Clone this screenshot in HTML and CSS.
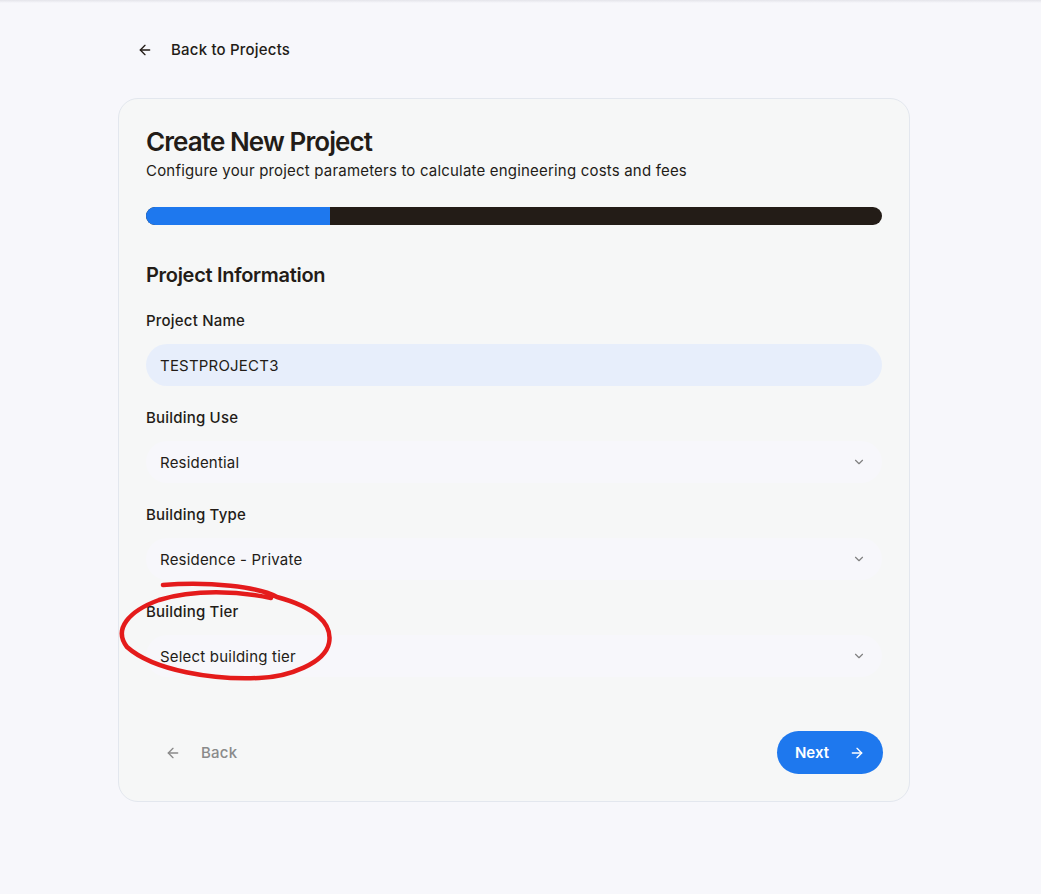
FILE: index.html
```html
<!DOCTYPE html>
<html lang="en">
<head>
<meta charset="utf-8">
<title>Create New Project</title>
<link rel="stylesheet" href="styles.css">
</head>
<body>
<div class="topline"></div>
<main class="page">
  <a class="back-link" href="#">
    <svg class="ico" width="16" height="16" viewBox="0 0 24 24" fill="none" stroke="currentColor" stroke-width="2" stroke-linecap="round" stroke-linejoin="round"><path d="M19 12H5"/><path d="M12 19l-7-7 7-7"/></svg>
    <span>Back to Projects</span>
  </a>

  <section class="card">
    <h1 class="title">Create New Project</h1>
    <p class="subtitle">Configure your project parameters to calculate engineering costs and fees</p>

    <div class="progress"><div class="progress-fill" style="width:25%"></div></div>

    <h2 class="section-title">Project Information</h2>

    <div class="fields">
      <div class="field">
        <label class="label">Project Name</label>
        <div class="input">TESTPROJECT3</div>
      </div>
      <div class="field">
        <label class="label">Building Use</label>
        <div class="select"><span>Residential</span>
          <svg class="chev" width="14" height="14" viewBox="0 0 24 24" fill="none" stroke="currentColor" stroke-width="2" stroke-linecap="round" stroke-linejoin="round"><path d="M6 9l6 6 6-6"/></svg>
        </div>
      </div>
      <div class="field">
        <label class="label">Building Type</label>
        <div class="select"><span>Residence - Private</span>
          <svg class="chev" width="14" height="14" viewBox="0 0 24 24" fill="none" stroke="currentColor" stroke-width="2" stroke-linecap="round" stroke-linejoin="round"><path d="M6 9l6 6 6-6"/></svg>
        </div>
      </div>
      <div class="field">
        <label class="label">Building Tier</label>
        <div class="select"><span>Select building tier</span>
          <svg class="chev" width="14" height="14" viewBox="0 0 24 24" fill="none" stroke="currentColor" stroke-width="2" stroke-linecap="round" stroke-linejoin="round"><path d="M6 9l6 6 6-6"/></svg>
        </div>
      </div>
    </div>

    <div class="actions">
      <button class="btn-back" type="button">
        <svg width="16" height="16" viewBox="0 0 24 24" fill="none" stroke="currentColor" stroke-width="2" stroke-linecap="round" stroke-linejoin="round"><path d="M19 12H5"/><path d="M12 19l-7-7 7-7"/></svg>
        <span>Back</span>
      </button>
      <button class="btn-next" type="button">
        <span>Next</span>
        <svg width="16" height="16" viewBox="0 0 24 24" fill="none" stroke="currentColor" stroke-width="2" stroke-linecap="round" stroke-linejoin="round"><path d="M5 12h14"/><path d="M12 5l7 7-7 7"/></svg>
      </button>
    </div>

    <svg class="scribble" width="230" height="110" viewBox="0 0 230 110" fill="none">
      <path d="M44,4 C90,0 140,6 158,16 C195,26 214,42 210,62 C206,82 170,96 140,97 C95,99 35,90 8,66 C-6,48 10,30 40,19 C75,8 120,10 152,17" stroke="#e41b1b" stroke-width="4.5" stroke-linecap="round" stroke-linejoin="round"/>
    </svg>
  </section>
</main>
</body>
</html>
```

FILE: styles.css
```css
* { box-sizing: border-box; }
html, body { margin: 0; padding: 0; }
body {
  background: #f7f7fb;
  font-family: Inter, "Noto Sans", "Liberation Sans", sans-serif;
  color: #231c17;
  min-height: 894px;
}
.topline {
  height: 3px;
  background: linear-gradient(#e4e4ea, #f7f7fb);
}
.page {
  width: 792px;
  margin-left: 118px;
  padding-top: 37px;
}
.back-link {
  display: inline-flex;
  align-items: center;
  gap: 18px;
  margin-left: 19px;
  color: #231c17;
  text-decoration: none;
  font-size: 15px;
  font-weight: 500;
  line-height: 20px;
  letter-spacing: 0.2px;
}
.back-link .ico { color: #231c17; }
.card {
  position: relative;
  margin-top: 36px;
  background: #f6f7f7;
  border: 1px solid #e3e7ee;
  border-radius: 20px;
  padding: 25px 27px 27px 27px;
}
.title {
  margin: 0;
  font-size: 26px;
  font-weight: 600;
  letter-spacing: -0.9px;
  line-height: 36px;
}
.subtitle {
  margin: 0;
  font-size: 15px;
  line-height: 22px;
  letter-spacing: 0.19px;
  color: #231c17;
}
.progress {
  margin-top: 25px;
  height: 18px;
  border-radius: 9px;
  background: #231c17;
  overflow: hidden;
}
.progress-fill {
  height: 100%;
  background: #1e78ee;
}
.section-title {
  margin: 36px 0 0 0;
  font-size: 20px;
  font-weight: 600;
  line-height: 28px;
  letter-spacing: -0.3px;
}
.fields {
  margin-top: 21px;
  display: flex;
  flex-direction: column;
  gap: 21px;
}
.field {
  display: flex;
  flex-direction: column;
  gap: 12px;
}
.label {
  font-size: 15px;
  font-weight: 500;
  line-height: 22px;
  letter-spacing: 0.2px;
}
.input, .select {
  height: 42px;
  border-radius: 21px;
  padding: 0 14px;
  display: flex;
  align-items: center;
  font-size: 15px;
  letter-spacing: 0.2px;
}
.input { background: #e7eefb; }
.select {
  background: #f7f7fb;
  justify-content: space-between;
  padding-right: 16px;
}
.chev { color: #808080; }
.actions {
  margin-top: 54px;
  display: flex;
  justify-content: space-between;
  align-items: center;
}
.btn-back {
  display: inline-flex;
  align-items: center;
  gap: 20px;
  border: none;
  background: transparent;
  color: #8a8a8a;
  font-family: inherit;
  font-size: 15px;
  font-weight: 500;
  letter-spacing: 0.2px;
  padding: 0 0 0 19px;
  height: 43px;
}
.btn-next {
  display: inline-flex;
  align-items: center;
  gap: 20px;
  border: none;
  background: #1e78ee;
  color: #fff;
  font-family: inherit;
  font-size: 15px;
  font-weight: 600;
  height: 43px;
  padding: 0 18px 0 18px;
  margin-right: -1px;
  border-radius: 22px;
}
.scribble {
  position: absolute;
  left: 0;
  top: 482px;
  pointer-events: none;
}
```
